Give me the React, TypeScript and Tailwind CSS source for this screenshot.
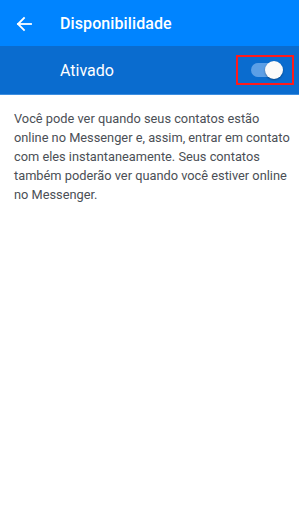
import React from 'react';

const App: React.FC = () => {
  return (
    <main
      className="w-[299px] h-[513px] bg-white flex flex-col"
      style={{ fontFamily: 'Roboto, "Noto Sans", sans-serif' }}
    >
      {/* Top bar */}
      <header className="h-[46px] pt-[2px] bg-[#0084ff] flex items-center text-white">
        <div className="w-[60px] flex items-center pl-[16px]">
          <svg width="16" height="16" viewBox="0 0 16 16" fill="none" stroke="white" strokeWidth="1.8" strokeLinecap="square">
            <path d="M15 8H2" />
            <path d="M8 2L2 8l6 6" />
          </svg>
        </div>
        <h1 className="text-[16px] font-medium tracking-[0.1px]">Disponibilidade</h1>
      </header>

      {/* Toggle row */}
      <div className="h-[49px] bg-[#0a6ccf] flex items-center text-white border-b border-[#3d8ee0]">
        <span className="pl-[60px] pt-[2px] flex-1 text-[16px]">Ativado</span>
        <div className="mr-[5px] w-[58px] h-[30px] border-2 border-[#ff1a1a] flex items-center justify-center">
          <div className="relative w-[28px] h-[14px] rounded-full bg-[#5c9fe6]">
            <div className="absolute -right-[4px] -top-[2px] w-[18px] h-[18px] rounded-full bg-[#fafafa] shadow-[0_1px_2px_rgba(0,0,0,0.35)]" />
          </div>
        </div>
      </div>

      {/* Description */}
      <p className="pl-[14px] pr-[8px] pt-[14px] text-[12.8px] leading-[19px] text-[#4b4f56]">
        Você pode ver quando seus contatos estão online no Messenger e, assim, entrar em contato com eles instantaneamente. Seus contatos também poderão ver quando você estiver online no Messenger.
      </p>
    </main>
  );
};

export default App;
